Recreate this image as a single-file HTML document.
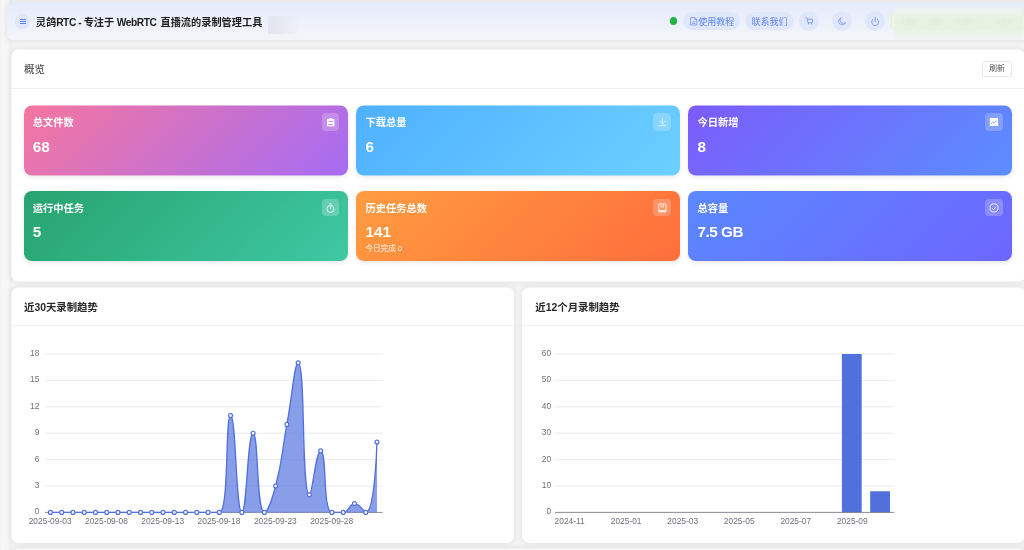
<!DOCTYPE html>
<html lang="zh-CN">
<head>
<meta charset="utf-8">
<title>灵鸽RTC - 专注于 WebRTC 直播流的录制管理工具</title>
<style>
*{box-sizing:border-box;margin:0;padding:0}
html,body{width:1024px;height:550px;overflow:hidden}
body{position:relative;background:#f4f4f4;font-family:"Liberation Sans","Noto Sans CJK SC",sans-serif;color:#303133;-webkit-font-smoothing:antialiased}
.abs{position:absolute}
.leftband{left:0;top:0;width:12px;height:550px;background:linear-gradient(90deg,#f2f2f2 0,#f7f7f7 2px,#f6f6f6 7px,#f0f0f0 11px)}
.header{left:7px;top:2px;width:1030px;height:37px;transform-origin:0 0;transform:translateY(.6px) scaleY(1.0081);border-radius:5.5px;background:linear-gradient(180deg,#e6ebfb 0%,#ecf0fb 45%,#f4f5f9 100%);box-shadow:0 0 6px rgba(0,0,0,.10)}
.menu{left:15px;top:13.7px;width:15px;height:15px;border-radius:50%;background:#dfe6fb}
.menu i{position:absolute;left:4.9px;width:5.8px;height:1px;background:#5b82f5}
.title{left:35.8px;top:13.8px;height:18px;line-height:18px;font-size:10.2px;font-weight:700;color:#1c1c1c;white-space:nowrap}
.lt{letter-spacing:-.42px}
.blur1{left:267.6px;top:16px;width:31px;height:18px;background:linear-gradient(90deg,#e3e6f0 0,#e6e9f2 40%,rgba(233,236,245,.6) 75%,rgba(236,239,248,0) 100%);filter:blur(.5px)}
.dot{left:669.6px;top:17.3px;width:7.8px;height:7.8px;border-radius:50%;background:#22b345}
.pill{top:12.4px;height:17.6px;border-radius:9px;background:#e0e7fb;color:#5f85f5;font-size:9.05px;line-height:20.6px;white-space:nowrap;font-weight:400;overflow:hidden}
.circ{top:11.1px;width:20px;height:20px;border-radius:50%;background:#e0e7fb}
.circ svg,.pill svg,.ibox svg{position:absolute;overflow:visible}
.gtag{left:891.2px;top:14px;width:140px;height:14.8px;border-radius:2.5px;background:#f2f9ea;border:1px solid #e0f3c6}
.greenblur{left:894px;top:7.8px;width:129px;height:31px;background:radial-gradient(ellipse 9px 6px at 16px 13.5px,#dceed6,rgba(220,238,214,0) 100%),radial-gradient(ellipse 9px 6px at 41px 13px,#dceed6,rgba(220,238,214,0) 100%),radial-gradient(ellipse 14px 5px at 72px 13.5px,#e0f0da,rgba(224,240,218,0) 100%),radial-gradient(ellipse 10px 5px at 111px 14px,#e0f0da,rgba(224,240,218,0) 100%),linear-gradient(180deg,#eef3f0 0,#ebf3ea 20%,#e6f2e2 36%,#e6f2e2 64%,#ebf3ea 80%,#eff3f1 100%);filter:blur(1px)}
.card{background:#fff;border-radius:7px;box-shadow:0 0 6px rgba(0,0,0,.09)}
.ctitle{font-size:10.4px;line-height:16px;height:16px;white-space:nowrap;color:#282828}
.hr{height:1px;background:#f0f1f4}
.btn{left:982px;top:61px;width:30px;height:15.6px;border:1px solid #e3e6eb;border-radius:2.5px;background:#fff;font-size:7.8px;line-height:13.6px;text-align:center;color:#505050}
.stat{width:324px;height:70px;border-radius:8px;color:#fff;box-shadow:0 1.5px 5px rgba(0,0,0,.09)}
.stat .lab{position:absolute;left:9.4px;top:11.1px;font-size:10.25px;line-height:14px;font-weight:700;white-space:nowrap}
.stat .num{position:absolute;left:9.4px;top:30.1px;font-size:15.3px;line-height:22px;font-weight:700;white-space:nowrap}
.stat .sub{position:absolute;left:9.4px;top:52.5px;font-size:7.6px;line-height:10px;white-space:nowrap;opacity:.92}
.ibox{position:absolute;right:9px;top:7.5px;width:18px;height:17.8px;border-radius:4px;background:rgba(255,255,255,.22)}
.c1 .lab,.c1 .num,.c1 .sub{left:8.8px}
.r1 .ibox{top:8px;height:18px;transform:translateY(-.5px)}
.r1 .lab{top:10.2px}
.r1 .num{top:29.8px}
.c1 .ibox{width:17.2px}
.c1 .ibox svg{left:0 !important}
.g1{background:linear-gradient(135deg,#f5769f 0%,#a56cf4 100%)}
.g2{background:linear-gradient(135deg,#4fb0ff 0%,#6cd0ff 100%)}
.g3{background:linear-gradient(135deg,#7b5cfa 0%,#5b8dff 100%)}
.g4{background:linear-gradient(135deg,#27a36f 0%,#3fc8a3 100%)}
.g5{background:linear-gradient(135deg,#ff9c40 0%,#ff6e3c 100%)}
.g6{background:linear-gradient(135deg,#5b88ff 0%,#6d66ff 100%)}
svg.chart{position:absolute;left:0;top:0}
svg.chart text{font-family:"Liberation Sans","Noto Sans CJK SC",sans-serif;font-size:8.4PX;fill:#6e7079}
svg.chart .ylab{text-anchor:end}
svg.chart .xlab{text-anchor:middle}
svg.chart .grid{stroke:#e3e6ee;stroke-width:.8}
svg.chart .axis{stroke:#6e7079;stroke-width:.8}
</style>
</head>
<body>
<div id="root" style="position:absolute;left:0;top:0;width:1024px;height:550px;overflow:hidden;will-change:transform">
<div class="abs leftband"></div>

<!-- header -->
<div class="abs header"></div>
<div class="abs menu"><i style="top:5.3px"></i><i style="top:7.35px"></i><i style="top:9.4px"></i></div>
<div class="abs title">灵鸽<span class="lt">RTC - </span>专注于<span class="lt" style="margin-right:1.7px"> WebRTC </span>直播流的录制管理工具</div>
<div class="abs blur1"></div>
<div class="abs dot"></div>
<div class="abs pill" style="left:682.9px;width:57.4px;padding-left:15.3px">
  <svg style="left:7px;top:4.4px" width="7.4" height="8.6" viewBox="0 0 14 16" fill="none" stroke="#6589f5" stroke-width="1.3"><path d="M1 1h8l4 4v10H1z"/><path d="M9 1v4h4M4 9h6M4 12h6"/></svg>使用教程</div>
<div class="abs pill" style="left:745.2px;width:48.7px;text-align:center">联系我们</div>
<div class="abs circ" style="left:799.2px"><svg style="left:0;top:0" width="20" height="20" viewBox="0 0 20 20" fill="none" stroke="#6589f5" stroke-width=".75" stroke-linejoin="round"><path d="M6.4 6.3l1.2.35.75 1.6"/><path d="M8.2 8.2h5.5l-.55 3.5H9z"/><path d="M9.4 11.9v1.6M12.6 11.9v1.6"/></svg></div>
<div class="abs circ" style="left:832.3px"><svg style="left:6px;top:5.6px" width="8.4" height="8.8" viewBox="0 0 16 17" fill="none" stroke="#6589f5" stroke-width="1.3"><path d="M6 1.5A7 7 0 1 0 14.5 11 6 6 0 0 1 6 1.5z"/></svg></div>
<div class="abs circ" style="left:865.2px"><svg style="left:0;top:0" width="20" height="20" viewBox="0 0 20 20" fill="none" stroke="#6589f5" stroke-width=".8" stroke-linecap="round"><path d="M10.2 6.2v4.5"/><path d="M8 8.3A3.48 3.48 0 1 0 12.4 8.3"/></svg></div>
<div class="abs gtag"></div>
<div class="abs greenblur"></div>

<!-- overview card -->
<div class="abs card" style="left:11px;top:49px;width:1014px;height:232px;transform:translate(.33px,.62px)"></div>
<div class="abs ctitle" style="left:24px;top:62.4px;font-weight:400;color:#3a3a3a">概览</div>
<div class="abs btn">刷新</div>
<div class="abs hr" style="left:11.3px;top:87.6px;width:1013px"></div>

<div class="abs stat g1 c1 r1" style="left:24px;top:105px;transform:translateY(.5px)"><div class="lab">总文件数</div><div class="num">68</div><div class="ibox"><svg style="left:.4px;top:0" width="17.2" height="18" viewBox="0 0 17.2 18"><path d="M5.1 6.1h7.3v7.2H5.1z" fill="#fff"/><rect x="7.3" y="5.1" width="2.9" height="1.6" rx=".7" fill="#fff"/><path d="M6.5 8.5h4.5M6.5 11.5h4.5" stroke="#b982e2" stroke-width=".9"/></svg></div></div>
<div class="abs stat g2 r1" style="left:356px;top:105px;transform:translateY(.5px)"><div class="lab">下载总量</div><div class="num">6</div><div class="ibox"><svg style="left:.4px;top:0" width="17.2" height="18" viewBox="0 0 17.2 18"><g fill="none" stroke="#fff" stroke-opacity=".9" stroke-width=".85"><path d="M9.5 5v5.6M6.6 8l2.9 2.8L12.4 8M5.8 12.6h7.4"/></g></svg></div></div>
<div class="abs stat g3 r1" style="left:688px;top:105px;transform:translateY(.5px)"><div class="lab">今日新增</div><div class="num">8</div><div class="ibox"><svg style="left:.4px;top:0" width="17.2" height="18" viewBox="0 0 17.2 18"><rect x="4.8" y="5" width="8.3" height="8" fill="#fff"/><path d="M6 10.8l1.7-1.6 1.3.9 2.6-2.7" fill="none" stroke="#7d93ff" stroke-width=".8"/></svg></div></div>
<div class="abs stat g4 c1" style="left:24px;top:191px"><div class="lab">运行中任务</div><div class="num">5</div><div class="ibox"><svg style="left:.4px;top:0" width="17.2" height="18" viewBox="0 0 17.2 18"><g fill="none" stroke="#fff" stroke-opacity=".92" stroke-width=".85"><circle cx="8.4" cy="9.9" r="3.5"/><path d="M8.4 7.2v3"/></g><path d="M7 4.4h2.8L8.4 6z" fill="#fff" fill-opacity=".92"/></svg></div></div>
<div class="abs stat g5" style="left:356px;top:191px"><div class="lab">历史任务总数</div><div class="num">141</div><div class="sub">今日完成 0</div><div class="ibox"><svg style="left:.4px;top:0" width="17.2" height="18" viewBox="0 0 17.2 18"><g fill="none" stroke="#fff" stroke-opacity=".92" stroke-width=".85"><rect x="5.7" y="4.8" width="7.3" height="8.1" rx=".8"/><path d="M5.7 11.9h7.3" stroke-width="1.5"/><path d="M8 4.8v3.5l1.3-.9 1.3.9V4.8" stroke-width=".7"/></g></svg></div></div>
<div class="abs stat g6" style="left:688px;top:191px"><div class="lab">总容量</div><div class="num" style="letter-spacing:-.45px">7.5 GB</div><div class="ibox"><svg style="left:.4px;top:0" width="17.2" height="18" viewBox="0 0 17.2 18"><g fill="none" stroke="#fff" stroke-opacity=".92" stroke-width=".85"><circle cx="9" cy="8.9" r="4.1"/><path d="M7 9.1l1.5 1.5 2.8-3"/></g></svg></div></div>

<!-- chart cards -->
<div class="abs card" style="left:11px;top:287px;width:503px;height:255px;transform-origin:100% 0;transform:translateY(.4px) scale(.99934,1.00196)"></div>
<div class="abs card" style="left:522px;top:287px;width:502.7px;height:255px;transform-origin:0 0;transform:translateY(.4px) scaleY(1.00196)"></div>
<div class="abs ctitle" style="left:24px;top:300.4px;font-weight:700">近30天录制趋势</div>
<div class="abs ctitle" style="left:535.3px;top:300.4px;font-weight:700">近12个月录制趋势</div>
<div class="abs hr" style="left:11.3px;top:324.8px;width:502.7px"></div>
<div class="abs hr" style="left:522px;top:324.8px;width:510px"></div>
<div class="abs card" style="left:11px;top:548px;width:1013.7px;height:60px;transform:translate(.33px,.7px)"></div>

<svg class="chart" width="1024" height="550" viewBox="0 0 1024 550">
<line x1="44.8" x2="382.6" y1="486.00" y2="486.00" class="grid"/>
<line x1="44.8" x2="382.6" y1="459.60" y2="459.60" class="grid"/>
<line x1="44.8" x2="382.6" y1="433.20" y2="433.20" class="grid"/>
<line x1="44.8" x2="382.6" y1="406.80" y2="406.80" class="grid"/>
<line x1="44.8" x2="382.6" y1="380.40" y2="380.40" class="grid"/>
<line x1="44.8" x2="382.6" y1="354.00" y2="354.00" class="grid"/>
<text x="39.4" y="514.40" class="ylab">0</text>
<text x="39.4" y="488.00" class="ylab">3</text>
<text x="39.4" y="461.60" class="ylab">6</text>
<text x="39.4" y="435.20" class="ylab">9</text>
<text x="39.4" y="408.80" class="ylab">12</text>
<text x="39.4" y="382.40" class="ylab">15</text>
<text x="39.4" y="356.00" class="ylab">18</text>
<line x1="44.8" x2="382.6" y1="512.40" y2="512.40" class="axis"/>
<path d="M50.43 512.40 C50.43 512.40 56.06 512.40 61.69 512.40 C67.32 512.40 67.32 512.40 72.95 512.40 C78.58 512.40 78.58 512.40 84.21 512.40 C89.84 512.40 89.84 512.40 95.47 512.40 C101.10 512.40 101.10 512.40 106.73 512.40 C112.36 512.40 112.36 512.40 117.99 512.40 C123.62 512.40 123.62 512.40 129.25 512.40 C134.88 512.40 134.88 512.40 140.51 512.40 C146.14 512.40 146.14 512.40 151.77 512.40 C157.40 512.40 157.40 512.40 163.03 512.40 C168.66 512.40 168.66 512.40 174.29 512.40 C179.92 512.40 179.92 512.40 185.55 512.40 C191.18 512.40 191.18 512.40 196.81 512.40 C202.44 512.40 202.44 512.40 208.07 512.40 C213.70 512.40 218.16 512.40 219.33 512.40 C229.42 512.40 224.96 415.60 230.59 415.60 C236.22 415.60 235.67 512.40 241.85 512.40 C246.93 512.40 247.48 433.20 253.11 433.20 C258.74 433.20 256.08 512.40 264.37 512.40 C267.34 512.40 272.09 499.83 275.63 486.00 C283.35 455.83 281.26 455.20 286.89 424.40 C292.52 393.60 294.54 362.80 298.15 362.80 C305.80 362.80 301.02 494.80 309.41 494.80 C312.28 494.80 315.94 450.80 320.67 450.80 C327.20 450.80 322.39 512.40 331.93 512.40 C333.65 512.40 338.23 512.40 343.19 512.40 C349.49 512.40 348.82 503.60 354.45 503.60 C360.08 503.60 363.83 512.40 365.71 512.40 C375.09 512.40 376.97 442.00 376.97 442.00 L376.97 512.40 L50.43 512.40 Z" fill="#5a78e0" fill-opacity="0.72"/>
<path d="M50.43 512.40 C50.43 512.40 56.06 512.40 61.69 512.40 C67.32 512.40 67.32 512.40 72.95 512.40 C78.58 512.40 78.58 512.40 84.21 512.40 C89.84 512.40 89.84 512.40 95.47 512.40 C101.10 512.40 101.10 512.40 106.73 512.40 C112.36 512.40 112.36 512.40 117.99 512.40 C123.62 512.40 123.62 512.40 129.25 512.40 C134.88 512.40 134.88 512.40 140.51 512.40 C146.14 512.40 146.14 512.40 151.77 512.40 C157.40 512.40 157.40 512.40 163.03 512.40 C168.66 512.40 168.66 512.40 174.29 512.40 C179.92 512.40 179.92 512.40 185.55 512.40 C191.18 512.40 191.18 512.40 196.81 512.40 C202.44 512.40 202.44 512.40 208.07 512.40 C213.70 512.40 218.16 512.40 219.33 512.40 C229.42 512.40 224.96 415.60 230.59 415.60 C236.22 415.60 235.67 512.40 241.85 512.40 C246.93 512.40 247.48 433.20 253.11 433.20 C258.74 433.20 256.08 512.40 264.37 512.40 C267.34 512.40 272.09 499.83 275.63 486.00 C283.35 455.83 281.26 455.20 286.89 424.40 C292.52 393.60 294.54 362.80 298.15 362.80 C305.80 362.80 301.02 494.80 309.41 494.80 C312.28 494.80 315.94 450.80 320.67 450.80 C327.20 450.80 322.39 512.40 331.93 512.40 C333.65 512.40 338.23 512.40 343.19 512.40 C349.49 512.40 348.82 503.60 354.45 503.60 C360.08 503.60 363.83 512.40 365.71 512.40 C375.09 512.40 376.97 442.00 376.97 442.00" fill="none" stroke="#5271dc" stroke-width="1.33" stroke-linejoin="round"/>
<circle cx="50.43" cy="512.40" r="1.95" fill="#fff" stroke="#5271dc" stroke-width="1.2"/>
<circle cx="61.69" cy="512.40" r="1.95" fill="#fff" stroke="#5271dc" stroke-width="1.2"/>
<circle cx="72.95" cy="512.40" r="1.95" fill="#fff" stroke="#5271dc" stroke-width="1.2"/>
<circle cx="84.21" cy="512.40" r="1.95" fill="#fff" stroke="#5271dc" stroke-width="1.2"/>
<circle cx="95.47" cy="512.40" r="1.95" fill="#fff" stroke="#5271dc" stroke-width="1.2"/>
<circle cx="106.73" cy="512.40" r="1.95" fill="#fff" stroke="#5271dc" stroke-width="1.2"/>
<circle cx="117.99" cy="512.40" r="1.95" fill="#fff" stroke="#5271dc" stroke-width="1.2"/>
<circle cx="129.25" cy="512.40" r="1.95" fill="#fff" stroke="#5271dc" stroke-width="1.2"/>
<circle cx="140.51" cy="512.40" r="1.95" fill="#fff" stroke="#5271dc" stroke-width="1.2"/>
<circle cx="151.77" cy="512.40" r="1.95" fill="#fff" stroke="#5271dc" stroke-width="1.2"/>
<circle cx="163.03" cy="512.40" r="1.95" fill="#fff" stroke="#5271dc" stroke-width="1.2"/>
<circle cx="174.29" cy="512.40" r="1.95" fill="#fff" stroke="#5271dc" stroke-width="1.2"/>
<circle cx="185.55" cy="512.40" r="1.95" fill="#fff" stroke="#5271dc" stroke-width="1.2"/>
<circle cx="196.81" cy="512.40" r="1.95" fill="#fff" stroke="#5271dc" stroke-width="1.2"/>
<circle cx="208.07" cy="512.40" r="1.95" fill="#fff" stroke="#5271dc" stroke-width="1.2"/>
<circle cx="219.33" cy="512.40" r="1.95" fill="#fff" stroke="#5271dc" stroke-width="1.2"/>
<circle cx="230.59" cy="415.60" r="1.95" fill="#fff" stroke="#5271dc" stroke-width="1.2"/>
<circle cx="241.85" cy="512.40" r="1.95" fill="#fff" stroke="#5271dc" stroke-width="1.2"/>
<circle cx="253.11" cy="433.20" r="1.95" fill="#fff" stroke="#5271dc" stroke-width="1.2"/>
<circle cx="264.37" cy="512.40" r="1.95" fill="#fff" stroke="#5271dc" stroke-width="1.2"/>
<circle cx="275.63" cy="486.00" r="1.95" fill="#fff" stroke="#5271dc" stroke-width="1.2"/>
<circle cx="286.89" cy="424.40" r="1.95" fill="#fff" stroke="#5271dc" stroke-width="1.2"/>
<circle cx="298.15" cy="362.80" r="1.95" fill="#fff" stroke="#5271dc" stroke-width="1.2"/>
<circle cx="309.41" cy="494.80" r="1.95" fill="#fff" stroke="#5271dc" stroke-width="1.2"/>
<circle cx="320.67" cy="450.80" r="1.95" fill="#fff" stroke="#5271dc" stroke-width="1.2"/>
<circle cx="331.93" cy="512.40" r="1.95" fill="#fff" stroke="#5271dc" stroke-width="1.2"/>
<circle cx="343.19" cy="512.40" r="1.95" fill="#fff" stroke="#5271dc" stroke-width="1.2"/>
<circle cx="354.45" cy="503.60" r="1.95" fill="#fff" stroke="#5271dc" stroke-width="1.2"/>
<circle cx="365.71" cy="512.40" r="1.95" fill="#fff" stroke="#5271dc" stroke-width="1.2"/>
<circle cx="376.97" cy="442.00" r="1.95" fill="#fff" stroke="#5271dc" stroke-width="1.2"/>
<text x="50.13" y="523.5" class="xlab">2025-09-03</text>
<text x="106.43" y="523.5" class="xlab">2025-09-08</text>
<text x="162.73" y="523.5" class="xlab">2025-09-13</text>
<text x="219.03" y="523.5" class="xlab">2025-09-18</text>
<text x="275.33" y="523.5" class="xlab">2025-09-23</text>
<text x="331.63" y="523.5" class="xlab">2025-09-28</text>
<line x1="555.0" x2="894.2" y1="486.00" y2="486.00" class="grid"/>
<line x1="555.0" x2="894.2" y1="459.60" y2="459.60" class="grid"/>
<line x1="555.0" x2="894.2" y1="433.20" y2="433.20" class="grid"/>
<line x1="555.0" x2="894.2" y1="406.80" y2="406.80" class="grid"/>
<line x1="555.0" x2="894.2" y1="380.40" y2="380.40" class="grid"/>
<line x1="555.0" x2="894.2" y1="354.00" y2="354.00" class="grid"/>
<text x="551.2" y="514.40" class="ylab">0</text>
<text x="551.2" y="488.00" class="ylab">10</text>
<text x="551.2" y="461.60" class="ylab">20</text>
<text x="551.2" y="435.20" class="ylab">30</text>
<text x="551.2" y="408.80" class="ylab">40</text>
<text x="551.2" y="382.40" class="ylab">50</text>
<text x="551.2" y="356.00" class="ylab">60</text>
<rect x="841.90" y="354.00" width="19.80" height="158.40" fill="#5170dc"/>
<rect x="870.17" y="491.28" width="19.80" height="21.12" fill="#5170dc"/>
<line x1="555.0" x2="894.2" y1="512.40" y2="512.40" class="axis"/>
<text x="569.63" y="523.5" class="xlab">2024-11</text>
<text x="626.17" y="523.5" class="xlab">2025-01</text>
<text x="682.70" y="523.5" class="xlab">2025-03</text>
<text x="739.23" y="523.5" class="xlab">2025-05</text>
<text x="795.77" y="523.5" class="xlab">2025-07</text>
<text x="852.30" y="523.5" class="xlab">2025-09</text>
</svg>
</div>
</body>
</html>
